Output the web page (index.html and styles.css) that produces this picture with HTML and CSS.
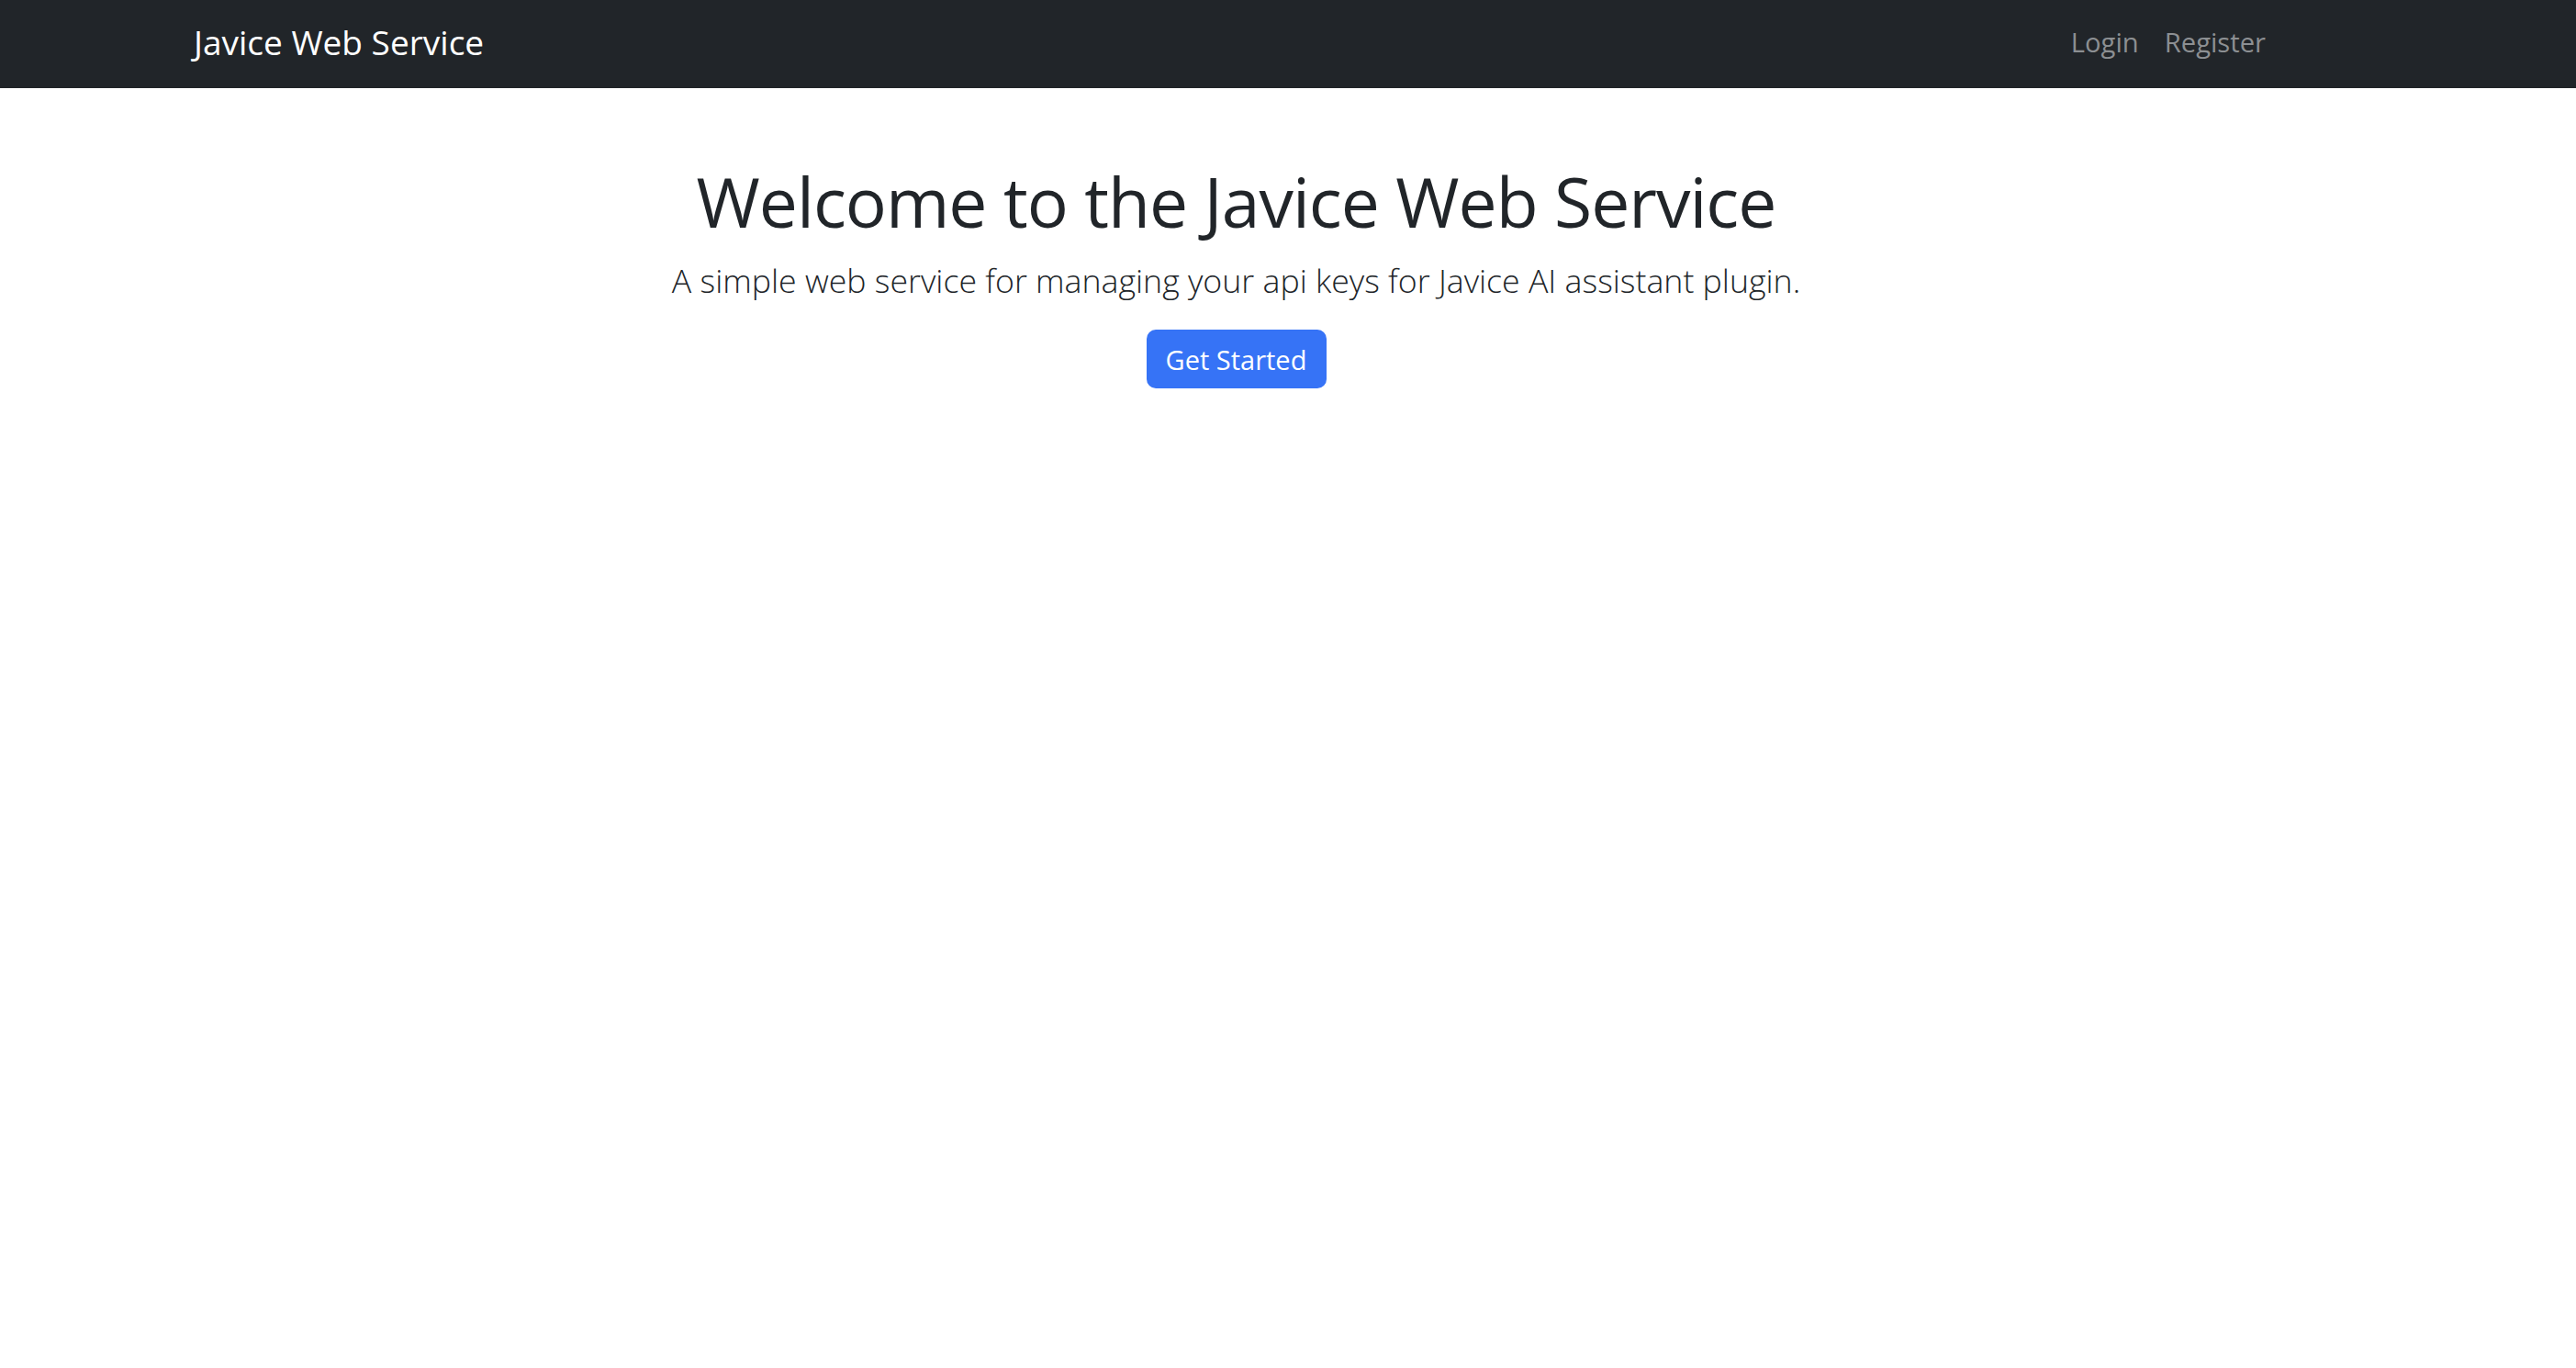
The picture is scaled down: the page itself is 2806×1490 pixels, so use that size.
FILE: index.html
```html
<!DOCTYPE html>
<html lang="en">
<head>
<meta charset="utf-8">
<title>Javice Web Service</title>
<link rel="stylesheet" href="styles.css">
</head>
<body>
<nav class="navbar">
  <div class="container nav-inner">
    <a class="brand" href="#">Javice Web Service</a>
    <ul class="nav">
      <li><a class="nav-link" href="#">Login</a></li>
      <li><a class="nav-link" href="#">Register</a></li>
    </ul>
  </div>
</nav>
<main class="container hero">
  <h1 class="title">Welcome to the Javice Web Service</h1>
  <p class="lead">A simple web service for managing your api keys for Javice AI assistant plugin.</p>
  <a class="btn" href="#">Get Started</a>
</main>
</body>
</html>
```
FILE: styles.css
```css
html, body {
  margin: 0;
  padding: 0;
  background: #ffffff;
}
body {
  font-family: "Open Sans", "Noto Sans", sans-serif;
  color: #212529;
}
.container {
  box-sizing: border-box;
  width: 2271px;
  margin-left: 211px;
}
.navbar {
  background: #212529;
  height: 96px;
  box-sizing: border-box;
  padding-bottom: 3px;
  display: flex;
  align-items: center;
}
.nav-inner {
  display: flex;
  align-items: center;
  justify-content: space-between;
}
.brand {
  color: #ffffff;
  text-decoration: none;
  font-size: 37px;
  line-height: 1.362;
}
.nav {
  list-style: none;
  margin: 0;
  padding: 0;
  display: flex;
}
.nav-link {
  display: block;
  padding: 0 14px;
  color: #8c8f92;
  text-decoration: none;
  font-size: 29.2px;
  line-height: 1.362;
}
.hero {
  display: flex;
  flex-direction: column;
  align-items: center;
  text-align: center;
}
.title {
  margin: 77px 0 0;
  font-size: 75px;
  font-weight: 400;
  letter-spacing: -1px;
  line-height: 92px;
}
.lead {
  margin: 14px 0 0;
  font-size: 35.7px;
  font-weight: 300;
  line-height: 52px;
}
.btn {
  margin-top: 28px;
  box-sizing: border-box;
  height: 64px;
  width: 196px;
  display: flex;
  align-items: center;
  justify-content: center;
  background: #3673f6;
  color: #ffffff;
  text-decoration: none;
  font-size: 29px;
  border-radius: 10px;
}
```
